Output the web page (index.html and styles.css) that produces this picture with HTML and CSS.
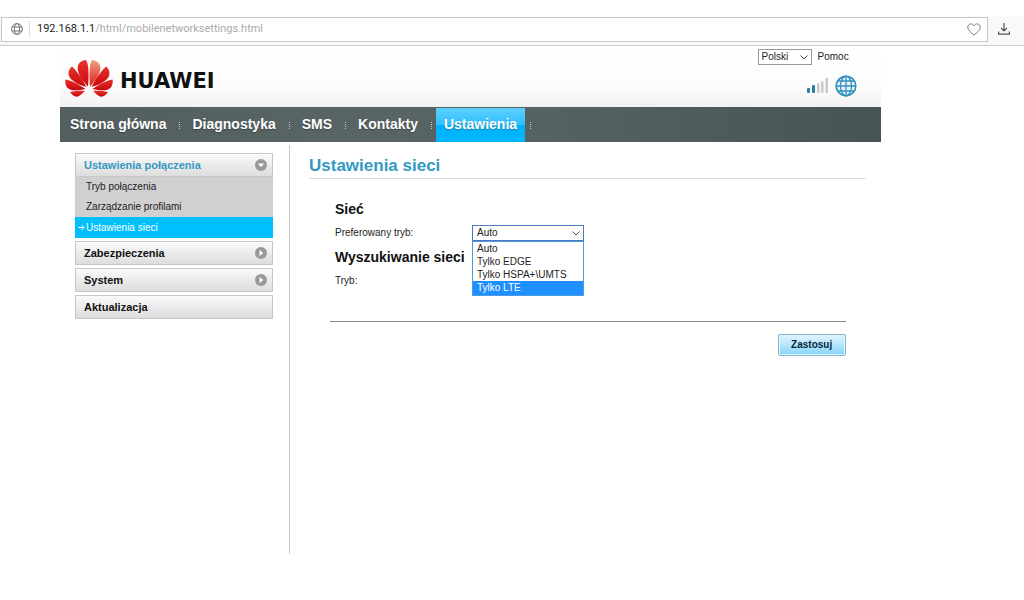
FILE: index.html
```html
<!DOCTYPE html>
<html lang="pl">
<head>
<meta charset="utf-8">
<title>Ustawienia sieci</title>
<link rel="stylesheet" href="styles.css">
</head>
<body>
<div class="browser-bar">
  <div class="address">
    <svg class="site-icon" viewBox="0 0 12 12" width="12" height="12" fill="none" stroke="#777"><circle cx="6" cy="6" r="5.4"/><ellipse cx="6" cy="6" rx="2.6" ry="5.4"/><path d="M1 4h10M1 8h10"/></svg>
    <span class="url"><span class="host">192.168.1.1</span>/html/mobilenetworksettings.html</span>
    <svg class="heart" viewBox="0 0 14 13" width="14" height="13" fill="none" stroke="#777"><path d="M7 12C4 9.500.8 7.300.8 4.200C.8.600 5.400-.300 7 2.900C8.600-.300 13.200.600 13.200 4.200C13.200 7.300 10 9.500 7 12Z"/></svg>
  </div>
  <svg class="download" viewBox="0 0 12 12" width="12" height="12" fill="none" stroke="#555" stroke-width="1.200"><path d="M6 0v7.500M3 4.800l3 3 3-3M.6 8.500v2.700h10.800V8.500"/></svg>
</div>
<div class="page">
  <header class="header">
    <div class="brand">
      <svg viewBox="0 0 48 38" width="48" height="38">
        <defs>
          <linearGradient id="petal" x1="0" y1="0" x2="0" y2="1"><stop offset="0" stop-color="#e8332c"/><stop offset="1" stop-color="#c8060e"/></linearGradient>
          <linearGradient id="petal-light" x1="0" y1="0" x2="0" y2="1"><stop offset="0" stop-color="#f3a184"/><stop offset="1" stop-color="#dc1c1a"/></linearGradient>
        </defs>
        <g fill="url(#petal)">
          <path d="M23 27.500C24 16 23.800 5 21 1C15.500 1.500 12.300 5 12.700 10C13.200 16 18 22 23 27.500Z"/>
          <path d="M21.500 28C17.500 20 11.500 11.500 7 7.500C3 11 2.500 15.500 5.500 19.500C9 23.500 15.500 26.500 21.500 28Z"/>
          <path d="M20.500 30C14 25.500 6.500 21.300 .5 20.500C-.5 25.500 2 30.500 8 31.200C12 31.500 16 31 20.500 30Z"/>
          <path d="M20 31.800C15 31.500 9 32 5 33C8 37.500 11 38.500 14 37C16.500 35.600 18.500 33.500 20 31.800Z"/>
          <path d="M26.500 28C30.500 20 36.500 11.500 41 7.500C45 11 45.500 15.500 42.500 19.500C39 23.500 32.500 26.500 26.500 28Z"/>
          <path d="M27.500 30C34 25.500 41.500 21.300 47.500 20.500C48.500 25.500 46 30.500 40 31.200C36 31.500 32 31 27.500 30Z"/>
          <path d="M28 31.800C33 31.500 39 32 43 33C40 37.500 37 38.500 34 37C31.500 35.600 29.500 33.500 28 31.800Z"/>
        </g>
        <path fill="url(#petal-light)" d="M25 27.500C24 16 24.200 5 27 1C32.500 1.500 35.700 5 35.300 10C34.800 16 30 22 25 27.500Z"/>
      </svg>
      <span class="wordmark">HUAWEI</span>
    </div>
    <div class="tools">
      <div class="lang">
        <span class="select-wrap">
          <select class="select select-lang" aria-label="Język"><option>Polski</option></select>
          <svg class="chevron" viewBox="0 0 8 5" width="8" height="5"><path d="M.5.500L4 4L7.500.500" fill="none" stroke="#444"/></svg>
        </span>
        <a class="help" href="#">Pomoc</a>
      </div>
      <div class="status">
        <svg viewBox="0 0 22 16" width="22" height="16"><g fill="#2a81a8"><rect x="0" y="10" width="3" height="5" rx="1"/><rect x="5" y="7" width="3" height="8" rx="1"/></g><g fill="#c6cacc"><rect x="10" y="5" width="2.500" height="10" rx="1"/><rect x="14" y="3" width="2.500" height="12" rx="1"/><rect x="18.500" y="0" width="2.500" height="15" rx="1"/></g></svg>
        <svg viewBox="0 0 22 22" width="22" height="22"><circle cx="11" cy="11" r="10" fill="#eaf6fb"/><g fill="none" stroke="#318fbd" stroke-width="1.300"><circle cx="11" cy="11" r="9.800" stroke-width="1.600"/><ellipse cx="11" cy="11" rx="5.500" ry="9.800"/><path d="M11 1v20M1 11h20M2.500 6h17M2.500 16h17"/></g></svg>
      </div>
    </div>
  </header>
  <nav class="nav">
    <a href="#">Strona główna</a><i></i>
    <a href="#">Diagnostyka</a><i></i>
    <a href="#">SMS</a><i></i>
    <a href="#">Kontakty</a><i></i>
    <a class="current" href="#">Ustawienia</a><i></i>
  </nav>
  <div class="body">
    <aside class="sidebar">
      <div class="group">
        <a class="menu open" href="#">Ustawienia połączenia
          <svg viewBox="0 0 12 12" width="12" height="12"><circle cx="6" cy="6" r="6" fill="#999"/><path d="M2.800 4.500h6.400L6 8.200Z" fill="#fff"/></svg></a>
        <ul class="submenu">
          <li><a href="#">Tryb połączenia</a></li>
          <li><a href="#">Zarządzanie profilami</a></li>
          <li><a class="active" href="#"><svg viewBox="0 0 7 7" width="7" height="7" fill="none" stroke="#fff"><path d="M0 3.500h6M3.500 1L6 3.500L3.500 6"/></svg>Ustawienia sieci</a></li>
        </ul>
      </div>
      <a class="menu" href="#">Zabezpieczenia
        <svg viewBox="0 0 12 12" width="12" height="12"><circle cx="6" cy="6" r="6" fill="#999"/><path d="M4.500 2.800v6.400L8.200 6Z" fill="#fff"/></svg></a>
      <a class="menu" href="#">System
        <svg viewBox="0 0 12 12" width="12" height="12"><circle cx="6" cy="6" r="6" fill="#999"/><path d="M4.500 2.800v6.400L8.200 6Z" fill="#fff"/></svg></a>
      <a class="menu" href="#">Aktualizacja</a>
    </aside>
    <main class="content">
      <h1>Ustawienia sieci</h1>
      <form class="form">
        <h2>Sieć</h2>
        <div class="row">
          <label for="mode">Preferowany tryb:</label>
          <span class="select-wrap">
            <select class="select select-mode" id="mode"><option>Auto</option><option>Tylko EDGE</option><option>Tylko HSPA+\UMTS</option><option>Tylko LTE</option></select>
            <svg class="chevron" viewBox="0 0 8 5" width="8" height="5"><path d="M.5.500L4 4L7.500.500" fill="none" stroke="#444"/></svg>
            <ul class="options" role="listbox" aria-label="Preferowany tryb">
              <li role="option">Auto</li>
              <li role="option">Tylko EDGE</li>
              <li role="option">Tylko HSPA+\UMTS</li>
              <li role="option" class="hover" aria-selected="true">Tylko LTE</li>
            </ul>
          </span>
        </div>
        <h2>Wyszukiwanie sieci</h2>
        <div class="row"><span>Tryb:</span></div>
        <div class="actions"><button class="apply" type="button">Zastosuj</button></div>
      </form>
    </main>
  </div>
</div>
</body>
</html>
```
FILE: styles.css
```css
* { box-sizing: border-box; }
body {
  margin: 0;
  padding-top: 16px;
  background: #fff;
  color: #222;
  font: 10px/16px "Liberation Sans", Arial, sans-serif;
}
a { color: inherit; text-decoration: none; }
ul { list-style: none; margin: 0; padding: 0; }
h1, h2 { margin: 0; }
svg { flex: none; }

.browser-bar {
  display: flex;
  align-items: center;
  gap: 10px;
  height: 30px;
  padding: 0 14px 3px 1px;
  background: #f8f9fa;
  border-bottom: 1px solid #ccc;
}
.address {
  flex: 1;
  display: flex;
  align-items: center;
  height: 25px;
  padding: 0 6px 0 9px;
  background: #fff;
  border: 1px solid #c4c6c8;
}
.url {
  flex: 1;
  margin-left: 6px;
  padding-left: 7px;
  border-left: 1px solid #ddd;
  color: #aaa;
  font: 11px/16px Roboto, sans-serif;
}
.host { color: #222; }

.page { margin: 0 14% 0 60px; }
.header {
  display: flex;
  justify-content: space-between;
  height: 61px;
  padding: 2px 24px 0 5px;
  background: linear-gradient(#fff, #fcfcfc 70%, #f1f1f1);
}
.brand { display: flex; align-items: center; gap: 7px; }
.wordmark { color: #111; font: bold 21px/24px "DejaVu Sans", sans-serif; padding-top: 6px; }
.tools { display: flex; flex-direction: column; gap: 10px; padding-top: 1px; }
.lang { display: flex; align-items: center; gap: 6px; padding-right: 8px; }
.status { display: flex; align-items: center; justify-content: flex-end; gap: 6px; }

.select-wrap { position: relative; display: flex; align-items: center; }
.select {
  appearance: none;
  margin: 0;
  padding: 0 4px;
  border: 1px solid #999;
  border-radius: 0;
  background: #fff;
  color: #222;
  font: 10px/14px "Liberation Sans", Arial, sans-serif;
}
.select-lang { width: 54px; height: 16px; padding: 0 3px; }
.select-mode { width: 112px; height: 16px; border-color: #4d78bd; }
.chevron { position: absolute; right: 4px; top: 6px; pointer-events: none; }
.options {
  position: absolute;
  top: 16px;
  left: 0;
  right: 0;
  border: 1px solid #4d9be0;
  background: #fff;
}
.options li { padding-left: 4px; line-height: 13px; }
.options .hover { background: #1e90ff; color: #fff; line-height: 14px; }

.nav {
  display: flex;
  align-items: center;
  height: 35px;
  padding-left: 2px;
  background: linear-gradient(90deg, #535e5f, #596465 35%, #566162 60%, #485354);
  color: #fff;
  font-weight: bold;
  font-size: 14px;
}
.nav a { padding: 0 8px 2px; line-height: 32px; text-shadow: 0 1px 1px #3a4344; }
.nav .current { background: linear-gradient(#5ecfff, #2fc0fd 50%, #02b1f8 50%, #00b7ff); text-shadow: 0 1px 1px #2684a8; }
.nav i { width: 1px; height: 7px; margin: 2px 4px 0 5px; border-left: 1px dotted #c3caca; }

.body { display: flex; gap: 16px; padding: 3px 15px 0; }
.sidebar {
  width: 198px;
  flex: none;
  display: flex;
  flex-direction: column;
  gap: 3px;
  padding-top: 8px;
}
.menu {
  display: flex;
  align-items: center;
  justify-content: space-between;
  height: 24px;
  padding: 0 5px 0 8px;
  border: 1px solid #c8c8c8;
  background: linear-gradient(#fafafa, #ddd);
  color: #111;
  font-weight: bold;
  font-size: 11px;
}
.menu.open { color: #3399c2; }
.submenu { background: #d0d0d0; }
.submenu a { display: flex; align-items: center; height: 20px; padding-left: 11px; }
.submenu .active { height: 21px; gap: 1px; padding-left: 3px; background: #00bfff; color: #fff; }

.content {
  flex: 1;
  min-height: 409px;
  padding: 9px 0 0 19px;
  border-left: 1px solid #c8c8c8;
}
h1 {
  border-bottom: 1px solid #ddd;
  color: #3399c2;
  font-size: 17px;
  line-height: 24px;
}
.form { padding: 18px 20px 0 21px; }
h2 { padding-left: 5px; color: #111; font-size: 14px; line-height: 24px; }
.row { display: flex; align-items: center; height: 24px; padding-left: 5px; }
.row label { width: 137px; }
.actions {
  display: flex;
  justify-content: flex-end;
  margin-top: 28px;
  padding-top: 12px;
  border-top: 1px solid #888;
}
.apply {
  width: 68px;
  height: 22px;
  padding: 0;
  border: 1px solid #8cb5ca;
  border-radius: 2px;
  background: linear-gradient(#e0f5ff, #b6e5fc 50%, #83d4fa);
  box-shadow: inset 0 0 0 1px #dff4fe;
  color: #06263c;
  font: bold 10px/18px "Liberation Sans", Arial, sans-serif;
}
```
